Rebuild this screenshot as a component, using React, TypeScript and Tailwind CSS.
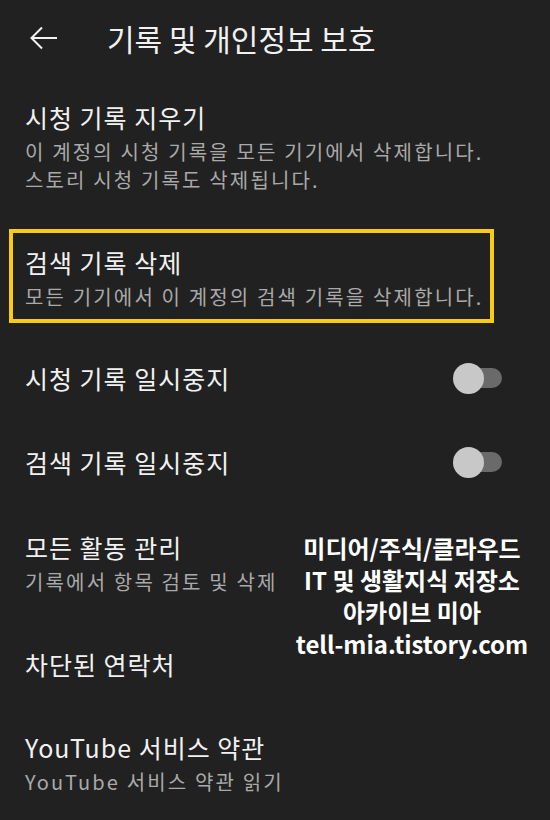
const font = { fontFamily: '"Noto Sans CJK KR", "Noto Sans", sans-serif' };

function Toggle() {
    return (
        <div className="relative w-[49px] h-[31px] flex items-center">
            <div className="absolute left-[9px] w-[40px] h-[20px] rounded-full bg-[#6a6a6a]" />
            <div className="absolute left-0 w-[31px] h-[31px] rounded-full bg-[#c8c8c8]" />
        </div>
    );
}

function Title({ children }: { children: React.ReactNode }) {
    return <div className="text-[25px] leading-[34px] tracking-[1px] text-[#f1f1f1] whitespace-nowrap">{children}</div>;
}

function Sub({ children }: { children: React.ReactNode }) {
    return <div className="text-[20px] leading-[28px] tracking-[2.15px] text-[#a9a9a9] whitespace-nowrap">{children}</div>;
}

export default function App() {
    return (
        <div className="relative w-[550px] h-[820px] bg-[#212121] overflow-hidden" style={font}>
            {/* Header */}
            <header className="h-[76px] flex items-center">
                <svg className="ml-[30px]" width="28" height="24" viewBox="0 0 28 24" fill="none" stroke="#f1f1f1" strokeWidth="2">
                    <path d="M27 12H2M12 1.5L1.5 12L12 22.5" />
                </svg>
                <h1 className="ml-[49px] text-[30px] leading-none text-[#f1f1f1]">기록 및 개인정보 보호</h1>
            </header>

            {/* Clear watch history */}
            <div className="pl-[25px] pt-[24px]">
                <Title>시청 기록 지우기</Title>
                <div className="mt-1">
                    <Sub>이 계정의 시청 기록을 모든 기기에서 삭제합니다.</Sub>
                    <Sub>스토리 시청 기록도 삭제됩니다.</Sub>
                </div>
            </div>

            {/* Highlighted: clear search history */}
            <div className="ml-[9px] mt-[35px] w-[485px] h-[94px] border-[4px] border-[#f9cb12] pl-[12px] pt-[12px]">
                <Title>검색 기록 삭제</Title>
                <div className="mt-1">
                    <Sub>모든 기기에서 이 계정의 검색 기록을 삭제합니다.</Sub>
                </div>
            </div>

            {/* Pause toggles */}
            <div className="mt-[13px] h-[84px] flex items-center justify-between pl-[25px] pr-[48px]">
                <Title>시청 기록 일시중지</Title>
                <Toggle />
            </div>
            <div className="h-[84px] flex items-center justify-between pl-[25px] pr-[48px]">
                <Title>검색 기록 일시중지</Title>
                <Toggle />
            </div>

            {/* Manage all activity */}
            <div className="pl-[25px] pt-[26px]">
                <Title>모든 활동 관리</Title>
                <div className="mt-1">
                    <Sub>기록에서 항목 검토 및 삭제</Sub>
                </div>
            </div>

            <div className="pl-[25px] mt-[51px]">
                <Title>차단된 연락처</Title>
            </div>

            <div className="pl-[25px] mt-[49px]">
                <Title>YouTube 서비스 약관</Title>
                <div className="mt-1">
                    <Sub>YouTube 서비스 약관 읽기</Sub>
                </div>
            </div>

            {/* Watermark overlay */}
            <div className="absolute left-[287px] top-[532px] w-[250px] flex flex-col items-center text-[24px] leading-[32px] font-bold text-white">
                <div>미디어/주식/클라우드</div>
                <div>IT 및 생활지식 저장소</div>
                <div>아카이브 미아</div>
                <div>tell-mia.tistory.com</div>
            </div>
        </div>
    );
}
